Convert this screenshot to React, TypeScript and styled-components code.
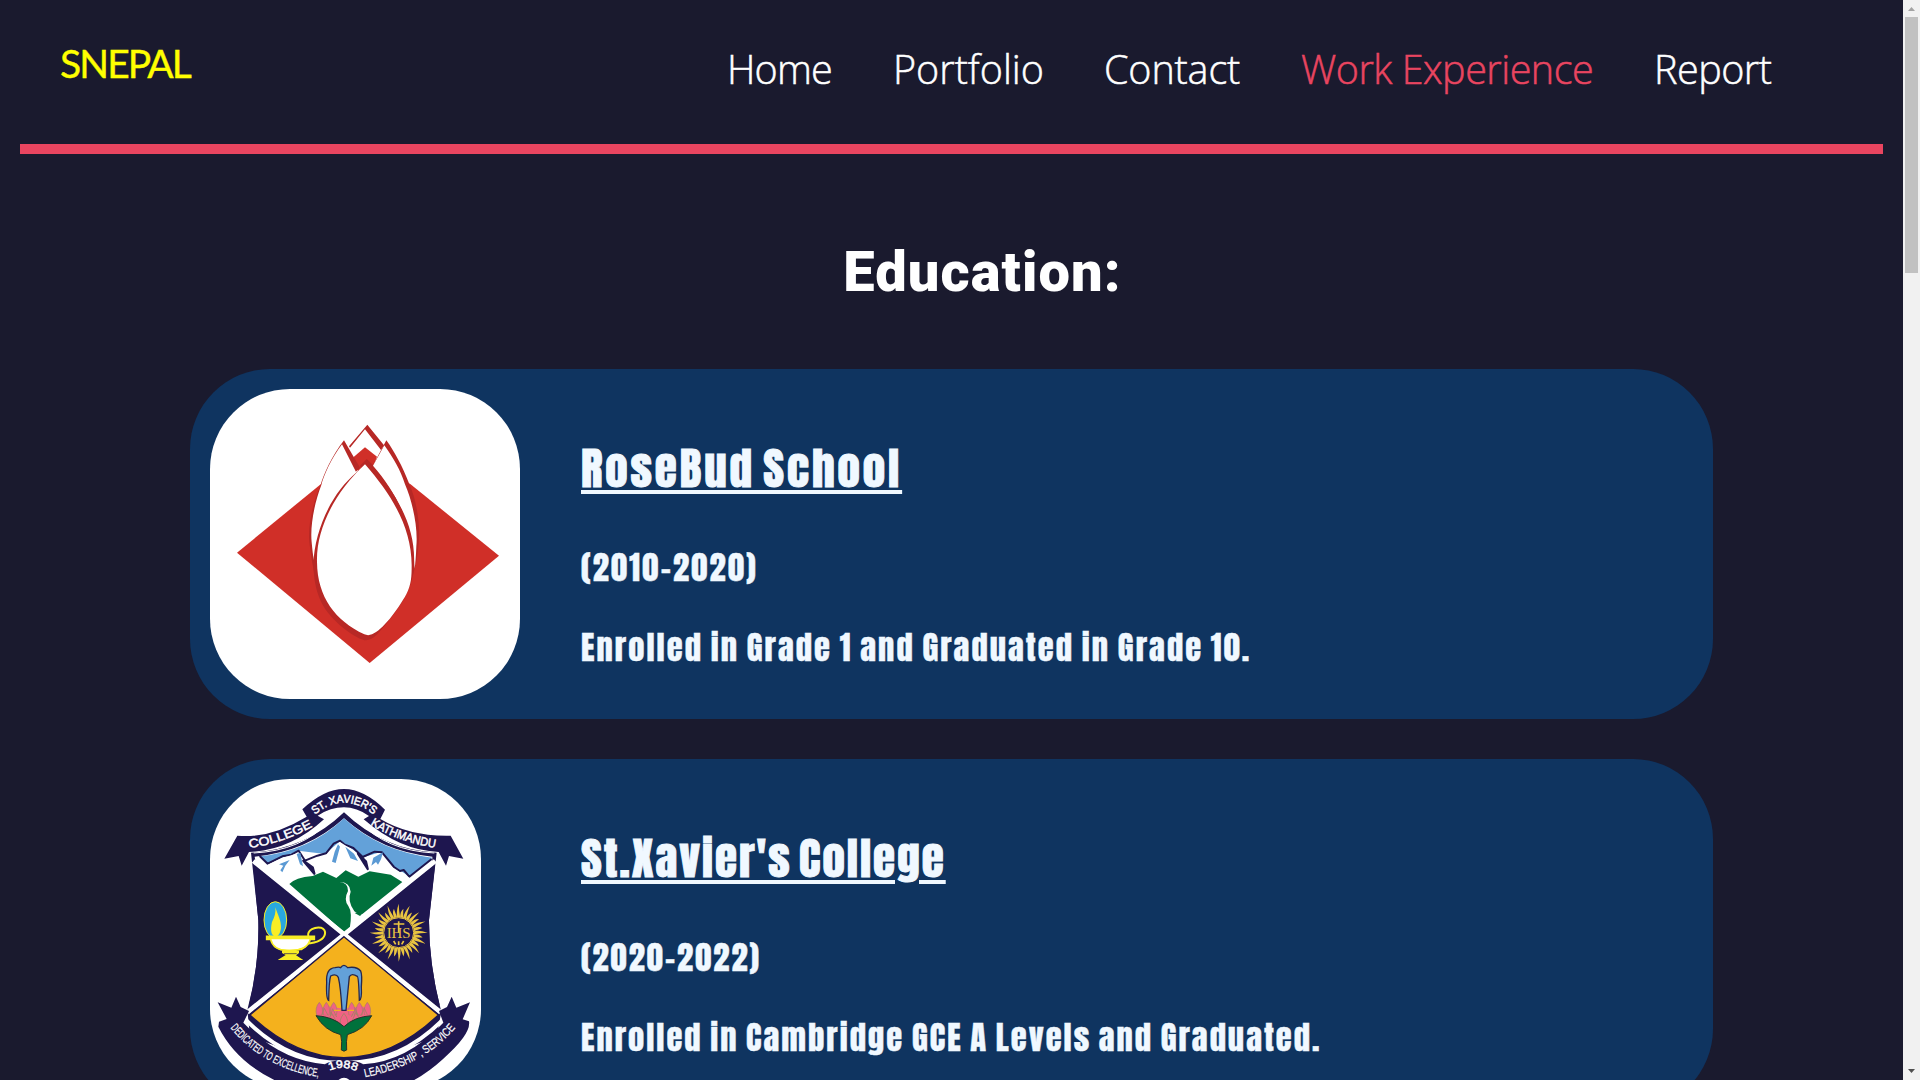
import React from 'react';
import styled, { createGlobalStyle } from 'styled-components';

const GlobalStyle = createGlobalStyle`
  * { box-sizing: border-box; margin: 0; padding: 0; }
  body { background: #1a1a2e; overflow: hidden; }
`;

const Window = styled.div`
  display: grid;
  grid-template-columns: 1fr 17px;
  height: 1080px;
  overflow: hidden;
  background: #1a1a2e;
`;

const Page = styled.div`
  height: 1080px;
  overflow: hidden;
`;

const Header = styled.header`
  display: flex;
  align-items: flex-start;
  justify-content: space-between;
  height: 154px;
  margin: 0 20px;
  padding: 0 109px 0 40px;
  border-bottom: 10px solid #e94560;
`;

const Brand = styled.div`
  padding-top: 39px;
  color: #ffff00;
  font: 400 39px/48px Lato, 'Open Sans', sans-serif;
  letter-spacing: -1.9px;
  -webkit-text-stroke: 0.4px currentColor;
`;

const Nav = styled.nav`
  display: flex;
  gap: 60px;
  padding-top: 42px;
`;

const NavLink = styled.a<{ $width: number; $spacing: number; $active?: boolean }>`
  width: ${(p) => p.$width}px;
  color: ${(p) => (p.$active ? '#e94560' : '#ffffff')};
  font: 300 39.5px/54px 'Open Sans', 'Noto Sans', sans-serif;
  letter-spacing: ${(p) => p.$spacing}px;
  -webkit-text-stroke: 0.5px currentColor;
  white-space: nowrap;
  text-decoration: none;
`;

const Main = styled.main`
  display: flex;
  flex-direction: column;
  padding: 86px 190px 0;
`;

const Heading = styled.h1`
  margin: 0 0 65px 62px;
  color: #ffffff;
  font: 900 56px/64px Roboto, 'Liberation Sans', Arial, sans-serif;
  letter-spacing: 1.1px;
  text-align: center;
`;

const Card = styled.section`
  display: grid;
  grid-template-columns: 371px 1fr;
  flex: none;
  height: 350px;
  margin-bottom: 40px;
  padding: 20px;
  border-radius: 80px;
  background: #0f3460;
`;

const Emblem = styled.div<{ $width: number }>`
  width: ${(p) => p.$width}px;
  height: 310px;
  overflow: hidden;
  border-radius: 80px;
  background: #ffffff;
  svg { display: block; width: 100%; height: 100%; }
`;

const Details = styled.div`
  padding-top: 49px;
  color: #f0f8ff;
  font-family: Anton, 'Roboto Condensed', 'Open Sans Condensed', sans-serif;
  white-space: nowrap;
`;

const School = styled.h2<{ $spacing: number }>`
  margin-bottom: 45px;
  font-size: 45px;
  font-weight: 400;
  line-height: 60px;
  letter-spacing: ${(p) => p.$spacing}px;
  word-spacing: -5px;
  -webkit-text-stroke: 0.9px currentColor;
  text-decoration: underline;
  text-decoration-thickness: 4px;
  text-underline-offset: 3px;
`;

const Line = styled.p<{ $spacing: number }>`
  margin-bottom: 30px;
  font-size: 32.5px;
  font-weight: 400;
  line-height: 50px;
  letter-spacing: ${(p) => p.$spacing}px;
  word-spacing: -2px;
  -webkit-text-stroke: 0.4px currentColor;
`;

const Track = styled.aside`
  display: flex;
  flex-direction: column;
  align-items: center;
  height: 1080px;
  background: #f1f1f1;
`;

const Thumb = styled.div`
  width: 13px;
  height: 256px;
  margin-bottom: auto;
  background: #c1c1c1;
`;

const ArrowBox = styled.svg`
  display: block;
  width: 17px;
  height: 17px;
`;

function RosebudLogo() {
  return (
    <svg viewBox="90 88 930 930">
      <path d="M171 579 L423 373 L688 371 L957 588 L569 910 Z" fill="#d02f28" />
      <path d="M423 373 L492 242 L562 195 L619 242 L688 371 L560 480 Z" fill="#fff" />
      <path d="M423 373 L400 240 H700 L688 371 L640 600 H450 Z" fill="#fff" />
      <path d="M562 195 L612 257 L603 271 L555 209 L510 264 L507 260 Z" fill="#b72825" />
      <path d="M521 292 L555 263 L591 291 L580 320 L555 345 L530 330 Z" fill="#d02f28" />
      <path d="M540 318 L560 298 L583 320 L559 350 Z" fill="#b72825" />
      <path d="M492 242 C455 290 430 345 421 379 C398 430 383 500 388 548 C393 585 396 615 406 650 L540 420 L526 338 L540 324 Z" fill="#b72825" />
      <path d="M486 254 C455 295 431 347 424 376 C403 430 390 500 395 548 C397 570 399 590 402 602 C416 500 465 408 530 341 Z" fill="#fff" />
      <path d="M619 242 C645 278 667 320 687 371 C710 420 722 500 716 550 C713 590 709 610 698 650 L604 440 L578 318 Z" fill="#b72825" />
      <path d="M613 257 C640 295 662 332 675 374 C699 430 714 505 709 560 C708 590 706 612 704 627 C698 500 655 405 579 318 Z" fill="#fff" />
      <path d="M555 312 L561 300 C650 400 708 500 702 614 C702 680 665 735 625 785 C597 820 580 841 558 842 C535 842 463 794 430 739 C411 707 401 665 400 613 C404 515 450 405 530 338 Z" fill="#b72825" />
      <path d="M555 314 C462 400 408 510 411 607 C412 713 467 784 553 824 Q564 829 576 824 C608 811 651 754 679 704 C694 676 695 650 695 617 C695 503 635 405 555 314 Z" fill="#fff" />
    </svg>
  );
}

const rays = Array.from({ length: 32 }, (_, i) => {
  const a = (i * Math.PI) / 16;
  const r = i % 2 ? 73 : 87;
  const at = (radius: number, angle: number) =>
    `${(656 + radius * Math.cos(angle)).toFixed(1)} ${(548 + radius * Math.sin(angle)).toFixed(1)}`;
  return `M${at(46, a - 0.1)} Q${at(63, a - 0.13)} ${at(r, a)} Q${at(66, a + 0.01)} ${at(46, a + 0.1)}Z`;
}).join(' ');

const petals = [418, 439, 461, 515, 538, 562];

function XavierCrest() {
  const navy = '#1e164f';
  return (
    <svg viewBox="90 87 813 930" fontFamily="'Liberation Sans', Arial, sans-serif">
      <defs>
        <path id="arcTop" d="M405 194 Q492 121 584 196" />
        <path id="arcCollege" d="M208 294 Q306 281 404 227" />
        <path id="arcKathmandu" d="M571 224 Q655 277 776 295" />
        <path id="arcMotto" d="M151 833 Q252 958 427 983" />
        <path id="arcValues" d="M555 982 Q740 943 829 830" />
        <path id="arcYear" d="M449 962 Q492 943 536 967" />
      </defs>
      <path d="M213 308 Q375 300 492 187 Q610 300 770 308 L747 510 Q747 650 784 785 L770 860 L492 960 L210 860 L202 780 Q238 650 235 510 Z" fill={navy} />
      <path d="M224 320 Q380 306 492 205 Q606 306 757 320 V346 L492 559 L228 345 Z" fill="#fff" />
      <path d="M240 319 Q388 304 492 205 Q598 304 757 323 L689 380 L640 348 L605 305 L550 322 L482 272 L435 312 L355 302 L262 341 Z" fill="#63a1d9" />
      <path d="M239 318 L263 341 L307 319 L334 314 L356 302 L375 332 L412 317 L438 310 L461 281 L480 272 L493 283 L520 294 L548 321 L584 305 L606 307 L642 351 L660 363 L671 360 L688 380 L755 327" fill="none" stroke={navy} strokeWidth="6" strokeLinejoin="round" />
      <path d="M262 345 L307 324 L355 309 L378 345 L438 315 L481 277 L518 300 L552 326 L599 309 L642 357 L689 384 L492 559 L230 346 Z" fill="#fff" />
      <path d="M370 332 L403 371 L398 352 Z M534 311 L563 357 L558 335 Z" fill={navy} stroke={navy} strokeWidth="7" strokeLinejoin="round" />
      <path d="M297 343 L329 330 L316 347 L307 367 L301 361 L310 347 Z M350 312 L361 308 L369 349 L360 343 Z M474 283 L480 290 L467 339 L456 335 L464 305 Z M496 290 L522 311 L534 333 L511 325 Z M580 323 L609 307 L603 328 L594 344 L588 336 L574 347 Z" fill="#5b9ad4" />
      <path d="M328 402 Q345 383 398 378 L429 365 L469 384 L497 361 L535 380 L569 364 L632 374 L667 396 L548 491 Q521 491 509 541 L492 546 Z" fill="#00713c" />
      <path d="M478 396 Q505 398 504 423 Q490 449 505 468 Q518 486 509 536 Q535 515 548 500 L523 484 Q501 452 512 425 Q510 396 478 396 Z" fill="#fff" />
      <path d="M524 489 L540 498 L557 481 Z" fill="#00713c" />
      <path d="M220 333 L782 787 M766 333 L202 787" stroke="#fff" strokeWidth="14" />
      <path d="M219 345 L472 550 L207 766 Q239 630 235 510 Z M765 345 L512 550 L779 766 Q746 630 747 510 Z" fill={navy} />
      <path d="M200 812 Q330 942 492 938 Q654 942 786 812" fill="none" stroke="#fff" strokeWidth="12" />
      <path d="M492 560 L775 795 Q640 923 492 923 Q346 923 210 795 Z" fill="#f4b11d" stroke={navy} strokeWidth="4" />
      <ellipse cx="286" cy="510" rx="34" ry="55" fill="#29a9e0" stroke="#f8ed25" strokeWidth="3" />
      <path d="M286 472 C294 498 304 510 303 535 C300 556 291 560 286 560 C274 557 270 541 276 516 C284 501 288 488 286 472 Z" fill="#f8ed25" />
      <path d="M385 560 C380 539 406 530 423 533 C443 541 436 563 419 571 Q406 579 378 581" fill="none" stroke="#f8ed25" strokeWidth="6" />
      <path d="M260 559 H403 V568 H391 Q382 601 332 602 H320 Q279 599 272 568 H260 Z" fill="#fff" stroke="#f8ed25" strokeWidth="5" />
      <path d="M258 560 H404 V568 H258 Z M278 589 Q326 610 382 589 L365 601 H300 Z M306 602 H357 V609 L348 616 L370 630 H293 L317 615 L306 609 Z" fill="#f8ed25" />
      <path d="M312 611 H350" stroke={navy} strokeWidth="2" />
      <path d={rays} fill="#e9c441" />
      <circle cx="656" cy="548" r="45" fill={navy} stroke="#e9c441" strokeWidth="3" />
      <text x="656" y="564" textAnchor="middle" fontFamily="'Liberation Serif', serif" fontSize="43" textLength="72" lengthAdjust="spacingAndGlyphs" fill="#e9c441">IHS</text>
      <path d="M656 514 V548 M641 522 H673 M641 573 L647 583 M656 574 V585 M671 573 L665 583" stroke="#e9c441" strokeWidth="5" />
      <path d="M412 797 L420 775 L440 768 L480 775 H505 L545 768 L565 777 L571 797 Z" fill="#f16284" />
      {petals.map((x) => (
        <path key={x} d={`M${x} 757 Q${x + 14} 773 ${x + 8} 796 H${x - 8} Q${x - 14} 773 ${x} 757`} fill="#f16284" stroke="#a48168" strokeWidth="2" />
      ))}
      <path d="M410 796 H573 Q548 812 528 818 L492 833 L456 818 Z" fill="#f16284" />
      <path d="M425 796 L433 775 L444 796 M451 799 L458 776 L470 801 M514 801 L526 776 L535 799 M542 798 L553 775 L562 794 M447 810 L454 788 L473 821 M539 810 L528 787 L512 821 M484 830 Q474 811 492 790 Q509 811 500 830" fill="none" stroke="#a48168" strokeWidth="2.5" />
      <path d="M408 797 Q460 800 492 830 Q523 800 575 797 Q555 838 502 854 Q498 872 500 900 Q492 907 484 900 Q487 872 482 854 Q434 842 408 797 Z" fill="#00713c" stroke="#26352a" strokeWidth="3" />
      <path d="M446 751 Q438 747 440 698 Q437 655 465 653 Q477 650 482 653 Q491 639 503 653 Q530 648 542 663 Q547 675 544 710 Q546 748 538 751 Q536 682 532 679 Q515 668 508 680 L498 781 H486 Q482 711 475 682 Q469 670 452 678 Q447 692 446 751 Z" fill="#63a1d9" stroke="#26284e" strokeWidth="4" />
      <path d="M462 781 H482 M502 781 H522" stroke="#f4b11d" strokeWidth="4" />
      <path d="M113 757 L154 773 L168 740 L182 771 L207 783 L190 818 Q300 932 435 943 Q447 932 492 930 Q537 932 549 943 Q680 935 790 818 L777 783 L801 771 L815 740 L829 773 L870 757 L848 808 L867 814 Q874 852 790 926 Q740 972 684 1000 L492 1035 L300 998 Q170 940 115 830 L117 815 L140 807 Z" fill={navy} />
      <circle cx="492" cy="1005" r="22" fill="#fff" />
      <path d="M172 257 Q270 267 380 200 L367 178 Q432 117 492 117 Q552 117 615 179 L601 207 Q690 260 812 257 L850 326 L807 318 L798 347 L776 306 Q660 302 551 208 L567 198 Q530 172 492 172 Q452 172 413 197 L432 208 Q330 302 207 306 L185 347 L176 318 L133 326 Z" fill={navy} />
      <path d="M221 309 Q364 302 445 216" fill="none" stroke="#fff" strokeWidth="3" />
      <path d="M763 309 Q620 302 539 216" fill="none" stroke="#fff" strokeWidth="3" />
      <g fill="#fff" stroke="#fff" strokeWidth="1.4">
        <text fontSize="34"><textPath href="#arcTop" textLength="194" lengthAdjust="spacingAndGlyphs">ST. XAVIER'S</textPath></text>
        <text fontSize="36"><textPath href="#arcCollege" textLength="202" lengthAdjust="spacingAndGlyphs">COLLEGE</textPath></text>
        <text fontSize="36"><textPath href="#arcKathmandu" textLength="208" lengthAdjust="spacingAndGlyphs">KATHMANDU</textPath></text>
        <text fontSize="35" strokeWidth=".6"><textPath href="#arcMotto" textLength="310" lengthAdjust="spacingAndGlyphs">DEDICATED TO EXCELLENCE,</textPath></text>
        <text fontSize="35" strokeWidth=".6"><textPath href="#arcValues" textLength="315" lengthAdjust="spacingAndGlyphs">LEADERSHIP , SERVICE</textPath></text>
        <text fontSize="33"><textPath href="#arcYear" textLength="83" lengthAdjust="spacingAndGlyphs">1988</textPath></text>
      </g>
    </svg>
  );
}

const links = [
  { label: 'Home', width: 106, spacing: -0.8 },
  { label: 'Portfolio', width: 151, spacing: 0 },
  { label: 'Contact', width: 137, spacing: -0.15 },
  { label: 'Work Experience', width: 293, spacing: -0.5, active: true },
  { label: 'Report', width: 120, spacing: -0.5 },
];

export default function App() {
  return (
    <Window>
      <GlobalStyle />
      <Page>
        <Header>
          <Brand>SNEPAL</Brand>
          <Nav>
            {links.map((l) => (
              <NavLink key={l.label} $width={l.width} $spacing={l.spacing} $active={l.active}>{l.label}</NavLink>
            ))}
          </Nav>
        </Header>
        <Main>
          <Heading>Education:</Heading>
          <Card>
            <Emblem $width={310}><RosebudLogo /></Emblem>
            <Details>
              <School $spacing={2.9}>RoseBud School</School>
              <Line $spacing={2.25}>(2010-2020)</Line>
              <Line $spacing={2.1}>Enrolled in Grade 1 and Graduated in Grade 10.</Line>
            </Details>
          </Card>
          <Card>
            <Emblem $width={271}><XavierCrest /></Emblem>
            <Details>
              <School $spacing={2}>St.Xavier's College</School>
              <Line $spacing={2.05}>(2020-2022)</Line>
              <Line $spacing={2.05}>Enrolled in Cambridge GCE A Levels and Graduated.</Line>
            </Details>
          </Card>
        </Main>
      </Page>
      <Track>
        <ArrowBox viewBox="0 0 17 17"><path d="M5 11 L8.5 7 L12 11 Z" fill="#a3a3a3" /></ArrowBox>
        <Thumb />
        <ArrowBox viewBox="0 0 17 17"><path d="M5 6 L8.5 10 L12 6 Z" fill="#505050" /></ArrowBox>
      </Track>
    </Window>
  );
}
